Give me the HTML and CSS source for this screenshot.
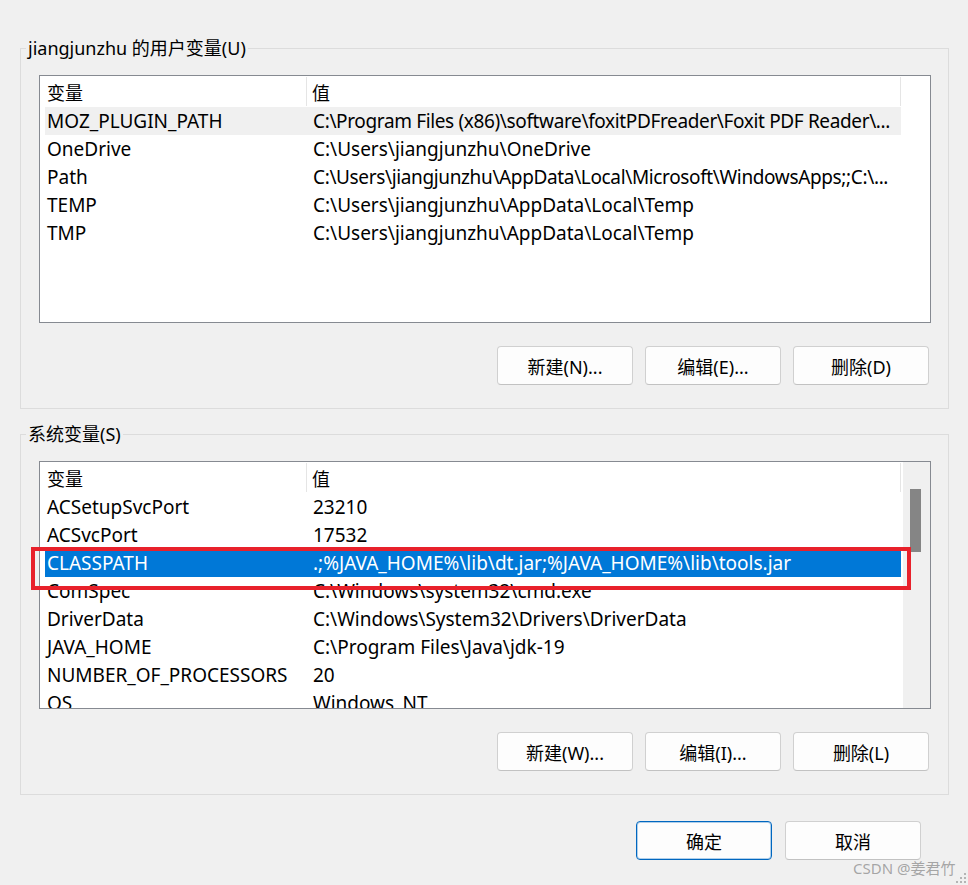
FILE: index.html
```html
<!DOCTYPE html>
<html lang="zh-CN">
<head>
    <meta charset="UTF-8">
    <meta name="viewport" content="width=device-width, initial-scale=1.0">
    <title>环境变量</title>
    <link rel="stylesheet" href="styles.css">
</head>
<body>
    <div class="dialog">
        <fieldset class="group">
            <legend>jiangjunzhu 的用户变量(U)</legend>
            <div class="group-body">
                <div class="list-wrap">
                    <div class="list">
                        <div class="list-head">
                            <div class="head-cell head-name">变量</div>
                            <div class="head-cell head-value">值</div>
                        </div>
                        <div class="row hover"><span>MOZ_PLUGIN_PATH</span><span class="tight">C:\Program Files (x86)\software\foxitPDFreader\Foxit PDF Reader\...</span></div>
                        <div class="row"><span>OneDrive</span><span>C:\Users\jiangjunzhu\OneDrive</span></div>
                        <div class="row"><span>Path</span><span class="tight">C:\Users\jiangjunzhu\AppData\Local\Microsoft\WindowsApps;;C:\...</span></div>
                        <div class="row"><span>TEMP</span><span>C:\Users\jiangjunzhu\AppData\Local\Temp</span></div>
                        <div class="row"><span>TMP</span><span>C:\Users\jiangjunzhu\AppData\Local\Temp</span></div>
                    </div>
                </div>
                <div class="actions">
                    <button class="btn">新建(N)...</button>
                    <button class="btn">编辑(E)...</button>
                    <button class="btn">删除(D)</button>
                </div>
            </div>
        </fieldset>

        <fieldset class="group group-system">
            <legend>系统变量(S)</legend>
            <div class="group-body">
                <div class="list-wrap">
                    <div class="list">
                        <div class="list-head">
                            <div class="head-cell head-name">变量</div>
                            <div class="head-cell head-value">值</div>
                        </div>
                        <div class="row"><span>ACSetupSvcPort</span><span>23210</span></div>
                        <div class="row"><span>ACSvcPort</span><span>17532</span></div>
                        <div class="row selected"><span>CLASSPATH</span><span>.;%JAVA_HOME%\lib\dt.jar;%JAVA_HOME%\lib\tools.jar</span></div>
                        <div class="row"><span>ComSpec</span><span>C:\Windows\system32\cmd.exe</span></div>
                        <div class="row"><span>DriverData</span><span>C:\Windows\System32\Drivers\DriverData</span></div>
                        <div class="row"><span>JAVA_HOME</span><span>C:\Program Files\Java\jdk-19</span></div>
                        <div class="row"><span>NUMBER_OF_PROCESSORS</span><span>20</span></div>
                        <div class="row"><span>OS</span><span>Windows_NT</span></div>
                        <div class="scrollbar"><div class="thumb"></div></div>
                    </div>
                    <div class="mark"></div>
                </div>
                <div class="actions">
                    <button class="btn">新建(W)...</button>
                    <button class="btn">编辑(I)...</button>
                    <button class="btn">删除(L)</button>
                </div>
            </div>
        </fieldset>

        <div class="footer">
            <button class="btn btn-default">确定</button>
            <button class="btn">取消</button>
        </div>
    </div>

    <div class="watermark">CSDN @姜君竹</div>
    <svg class="grip" width="12" height="12" viewBox="0 0 12 12">
        <rect x="9" y="1" width="2" height="2" fill="#b4b4b4"/>
        <rect x="5" y="5" width="2" height="2" fill="#b4b4b4"/>
        <rect x="9" y="5" width="2" height="2" fill="#b4b4b4"/>
        <rect x="1" y="9" width="2" height="2" fill="#b4b4b4"/>
        <rect x="5" y="9" width="2" height="2" fill="#b4b4b4"/>
        <rect x="9" y="9" width="2" height="2" fill="#b4b4b4"/>
    </svg>
</body>
</html>
```

FILE: styles.css
```css
body {
    margin: 0;
    background-color: #f0f0f0;
    font-family: 'Noto Sans', 'Noto Sans CJK SC', sans-serif;
    font-size: 18px;
    color: #000;
    height: 885px;
    overflow: hidden;
}
.dialog {
    padding: 35px 19px 0 20px;
}
.group {
    margin: 0;
    padding: 14px 17px 23px 5px;
    border: 1px solid #dcdcdc;
    min-inline-size: 0;
}
.group-system {
    margin-top: 12px;
}
.group legend {
    padding: 0 2px;
    line-height: 26px;
    height: 26px;
}
.group-body {
    margin-left: 13px;
}
.list-wrap {
    position: relative;
}
.list {
    position: relative;
    height: 248px;
    box-sizing: border-box;
    border: 1px solid #868a91;
    background-color: #ffffff;
    overflow: hidden;
}
.list-head {
    display: flex;
    height: 31px;
    width: 861px;
}
.head-cell {
    display: flex;
    align-items: center;
    box-sizing: border-box;
    border-right: 1px solid #e5e5e5;
    margin: 1px 0;
}
.head-name {
    width: 267px;
    padding-left: 7px;
}
.head-value {
    flex: 1;
    padding-left: 5px;
}
.row {
    display: grid;
    grid-template-columns: 266px 1fr;
    height: 28px;
    width: 856px;
    margin-left: 5px;
    align-items: center;
    white-space: nowrap;
    font-size: 19px;
}
.row span {
    padding-left: 2px;
    overflow: hidden;
}
.row .tight {
    letter-spacing: -0.36px;
}
.row.hover {
    background-color: #f0f0f0;
}
.row.selected {
    background-color: #0078d7;
    color: #ffffff;
}
.scrollbar {
    position: absolute;
    top: 0;
    right: 0;
    bottom: 0;
    width: 27px;
    background-color: #f0f0f0;
}
.thumb {
    margin: 27px 0 0 7px;
    width: 11px;
    height: 63px;
    background-color: #858585;
}
.mark {
    position: absolute;
    left: -8px;
    top: 86px;
    width: 880px;
    height: 43px;
    box-sizing: border-box;
    border: 4px solid #e8212b;
}
.actions {
    display: flex;
    justify-content: flex-end;
    gap: 12px;
    margin-top: 23px;
    padding-right: 2px;
}
.btn {
    width: 136px;
    height: 39px;
    box-sizing: border-box;
    background-color: #fdfdfd;
    border: 1px solid #d0d0d0;
    border-bottom-color: #c2c2c2;
    border-radius: 4px;
    font-family: inherit;
    font-size: 18px;
    color: #000;
    padding: 0;
}
.btn-default {
    border: 1px solid #0067c0;
    box-shadow: inset 0 0 0 1px rgba(0, 103, 192, 0.3);
}
.footer {
    display: flex;
    justify-content: flex-end;
    gap: 13px;
    margin-top: 26px;
    padding-right: 28px;
}
.watermark {
    position: absolute;
    left: 853px;
    top: 857px;
    font-size: 15px;
    color: rgba(140, 140, 140, 0.75);
    white-space: nowrap;
}
.grip {
    position: absolute;
    right: 1px;
    bottom: 1px;
}
```
